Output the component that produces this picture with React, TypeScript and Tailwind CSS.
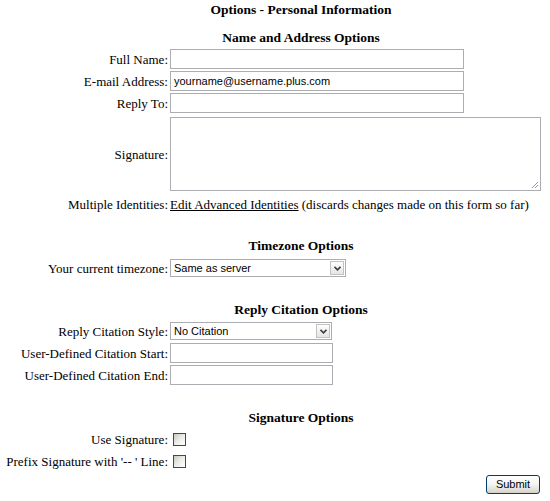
import { ReactNode } from 'react';

type RowProps = {
  label: string;
  children: ReactNode;
  className?: string;
};

function Row({ label, children, className = 'h-[22px] items-center' }: RowProps) {
  return (
    <div className={`flex ${className}`}>
      <div className="w-[170px] shrink-0 whitespace-nowrap pr-[2px] text-right">{label}</div>
      <div className="flex min-w-0 grow items-center">{children}</div>
    </div>
  );
}

function Heading({ children, className = '' }: { children: ReactNode; className?: string }) {
  return (
    <div className={`h-[15px] pl-[52px] text-center text-[13.5px] font-bold leading-[15px] ${className}`}>
      {children}
    </div>
  );
}

function TextBox({ value = '', width }: { value?: string; width: string }) {
  return (
    <div
      className={`${width} flex h-[20px] items-center border border-[#abadb3] bg-white pl-[3px] font-['Liberation_Sans',Arial,sans-serif] text-[11px] text-black`}
    >
      {value}
    </div>
  );
}

function Select({ value, width }: { value: string; width: string }) {
  return (
    <div
      className={`${width} flex h-[18px] items-center border border-[#abadb3] bg-white font-['Liberation_Sans',Arial,sans-serif] text-[11px] text-black`}
    >
      <span className="grow pl-[3px]">{value}</span>
      <span className="mr-px flex h-[14px] w-[14px] items-center justify-center border border-[#c2c2c2] bg-gradient-to-b from-white to-[#e4e4e4]">
        <svg width="7" height="5" viewBox="0 0 7 5">
          <path d="M0.5 0.8 L3.5 3.8 L6.5 0.8" fill="none" stroke="#3d3d3d" strokeWidth="1.6" />
        </svg>
      </span>
    </div>
  );
}

function CheckBox() {
  return (
    <div className="ml-[3px] h-[13px] w-[13px] border border-[#1c5180] bg-gradient-to-br from-[#c9c9c3] via-[#ececE8] to-white" />
  );
}

export default function App() {
  return (
    <div className="flex w-[550px] flex-col bg-white font-['Liberation_Serif','Times_New_Roman',serif] text-[13px] leading-[15px] text-black">
      <Heading className="mt-[2px]">Options - Personal Information</Heading>

      <Heading className="mt-[13px]">Name and Address Options</Heading>
      <div className="mt-[3px] flex flex-col">
        <Row label="Full Name:">
          <TextBox width="w-[294px]" />
        </Row>
        <Row label="E-mail Address:">
          <TextBox width="w-[294px]" value="yourname@username.plus.com" />
        </Row>
        <Row label="Reply To:">
          <TextBox width="w-[294px]" />
        </Row>
        <Row label="Signature:" className="items-center pt-[3px] pb-[2px]">
          <div className="relative h-[74px] w-[371px] border border-[#abadb3] bg-white">
            <svg className="absolute right-px bottom-px" width="9" height="9" viewBox="0 0 9 9">
              <path d="M8 2 L2 8 M8 5 L5 8" stroke="#9a9a9a" strokeWidth="1" />
            </svg>
          </div>
        </Row>
        <Row label="Multiple Identities:">
          <span className="whitespace-nowrap">
            <a href="#" className="text-black underline">
              Edit Advanced Identities
            </a>{' '}
            (discards changes made on this form so far)
          </span>
        </Row>
      </div>

      <Heading className="mt-[23px]">Timezone Options</Heading>
      <div className="mt-[4px]">
        <Row label="Your current timezone:">
          <Select width="w-[176px]" value="Same as server" />
        </Row>
      </div>

      <Heading className="mt-[23px]">Reply Citation Options</Heading>
      <div className="mt-[3px] flex flex-col">
        <Row label="Reply Citation Style:">
          <Select width="w-[162px]" value="No Citation" />
        </Row>
        <Row label="User-Defined Citation Start:">
          <TextBox width="w-[163px]" />
        </Row>
        <Row label="User-Defined Citation End:">
          <TextBox width="w-[163px]" />
        </Row>
      </div>

      <Heading className="mt-[24px]">Signature Options</Heading>
      <div className="mt-[3px] flex flex-col">
        <Row label="Use Signature:">
          <CheckBox />
        </Row>
        <Row label="Prefix Signature with '-- ' Line:">
          <CheckBox />
        </Row>
      </div>

      <div className="mt-[3px] flex justify-end pr-[10px]">
        <button
          type="button"
          className="h-[19px] w-[54px] rounded-[3px] border border-[#003c74] bg-gradient-to-b from-white via-[#f3f3ef] to-[#d6d3ca] font-['Liberation_Sans',Arial,sans-serif] text-[11px] leading-[17px] text-black"
        >
          Submit
        </button>
      </div>
    </div>
  );
}
